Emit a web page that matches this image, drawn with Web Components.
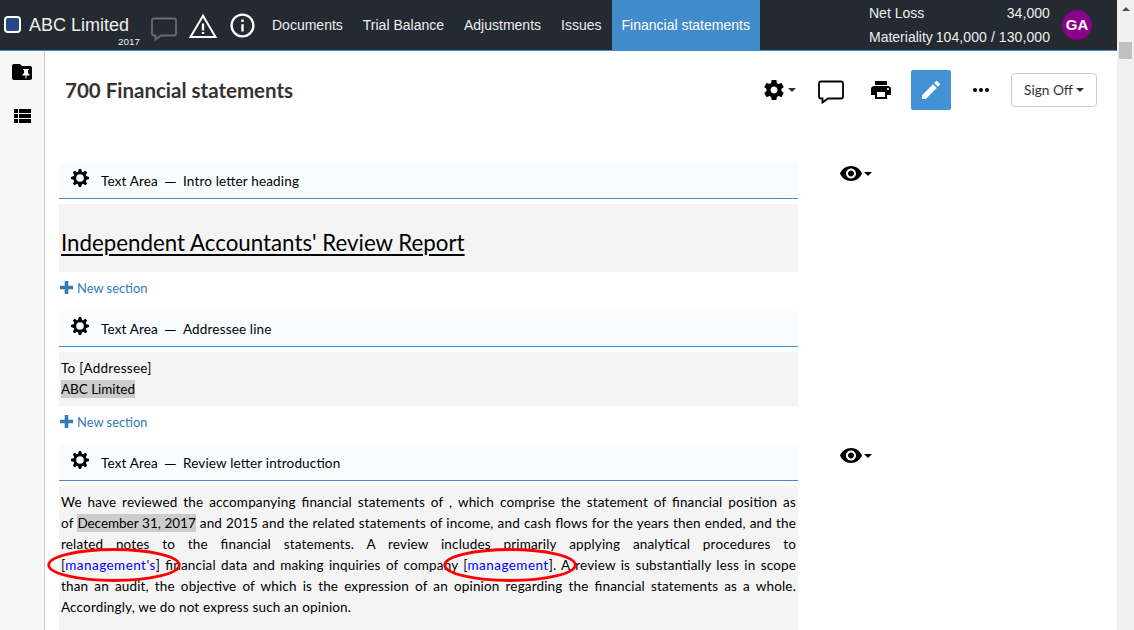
<!DOCTYPE html>
<html lang="en">
<head>
<meta charset="utf-8">
<title>ABC Limited</title>
<style>
html,body{margin:0;height:630px;overflow:hidden;background:#fff;font-family:Lato,"Liberation Sans",sans-serif}
</style>
</head>
<body>
<review-app></review-app>
<script>
const ICONS = {
  chat: ['0 0 26 24', '<path d="M3 1.5H23Q25 1.5 25 3.500V16.500Q25 18.500 23 18.500H10L4.500 22.500V18.500H3Q1 18.500 1 16.500V3.500Q1 1.500 3 1.500Z" fill="none" stroke="currentColor" stroke-width="1.800" stroke-linejoin="miter"/>'],
  warn: ['0 0 30 26', '<path d="M15 2.800L27.500 24H2.500Z" fill="none" stroke="currentColor" stroke-width="2"/><path d="M15 10.500V17.500M15 19V21" stroke="currentColor" stroke-width="2.300"/>'],
  info: ['0 0 24 24', '<path d="M11 7h2v2h-2zm0 4h2v6h-2zm1-9C6.480 2 2 6.480 2 12s4.480 10 10 10 10-4.480 10-10S17.520 2 12 2zm0 18c-4.410 0-8-3.590-8-8s3.590-8 8-8 8 3.590 8 8-3.590 8-8 8z" fill="currentColor"/>'],
  folder: ['0 0 20 16', '<path d="M2 0H8L10 2H18Q20 2 20 4V14Q20 16 18 16H2Q0 16 0 14V2Q0 0 2 0Z" fill="currentColor"/><path d="M11 5h6v1h-1v3l1.500 1.500v1h-3V14.500h-1V11.500h-3v-1L12 9V6h-1z" fill="#fff"/>'],
  list: ['0 0 17 14', '<path d="M0 0h4v4H0zM5 0h12v4H5zM0 5h4v4H0zM5 5h12v4H5zM0 10h4v4H0zM5 10h12v4H5z" fill="currentColor"/>'],
  gear: ['2 2 20 20', '<path fill="currentColor" d="M19.430 12.980c.04-.32.07-.64.07-.98s-.03-.66-.07-.98l2.110-1.650c.19-.15.24-.42.12-.64l-2-3.460c-.12-.22-.39-.3-.61-.22l-2.490 1c-.52-.4-1.080-.73-1.690-.98l-.38-2.650C14.460 2.180 14.250 2 14 2h-4c-.25 0-.46.18-.49.42l-.38 2.650c-.61.25-1.170.59-1.690.98l-2.490-1c-.23-.09-.49 0-.61.22l-2 3.460c-.13.22-.07.49.12.64l2.110 1.650c-.04.32-.07.65-.07.98s.03.66.07.98l-2.110 1.650c-.19.15-.24.42-.12.64l2 3.460c.12.22.39.3.61.22l2.490-1c.52.4 1.080.73 1.690.98l.38 2.650c.03.24.24.42.49.42h4c.25 0 .46-.18.49-.42l.38-2.650c.61-.25 1.170-.59 1.690-.98l2.490 1c.23.09.49 0 .61-.22l2-3.460c.12-.22.07-.49-.12-.64l-2.110-1.650zM12 15.500c-1.930 0-3.500-1.570-3.500-3.500s1.570-3.500 3.500-3.500 3.500 1.570 3.500 3.500-1.570 3.500-3.500 3.500z"/>'],
  cog: ['-9 -9 18 18', '<circle r="5.200" fill="none" stroke="currentColor" stroke-width="2.800"/><g fill="currentColor">' + [0,45,90,135,180,225,270,315].map(a => `<path transform="rotate(${a})" d="M-2 -6L-1.100 -9H1.100L2 -6Z"/>`).join('') + '</g>'],
  print: ['2 3 20 18', '<path fill="currentColor" d="M19 8H5c-1.660 0-3 1.340-3 3v6h4v4h12v-4h4v-6c0-1.660-1.340-3-3-3zm-3 11H8v-5h8v5zm3-7c-.55 0-1-.45-1-1s.45-1 1-1 1 .45 1 1-.45 1-1 1zm-1-9H6v4h12V3z"/>'],
  pencil: ['3 3 18 18', '<path fill="currentColor" d="M3 17.250V21h3.750L17.810 9.940l-3.750-3.750L3 17.250zM20.710 7.040c.39-.39.39-1.020 0-1.410l-2.340-2.340c-.39-.39-1.020-.39-1.410 0l-1.830 1.830 3.750 3.750 1.830-1.830z"/>'],
  dots: ['0 0 16 4', '<g fill="currentColor"><circle cx="2" cy="2" r="2"/><circle cx="8" cy="2" r="2"/><circle cx="14" cy="2" r="2"/></g>'],
  eye: ['1 4.500 22 15', '<path fill="currentColor" d="M12 4.500C7 4.500 2.730 7.610 1 12c1.730 4.390 6 7.500 11 7.500s9.270-3.110 11-7.500c-1.730-4.390-6-7.500-11-7.500zM12 17c-2.760 0-5-2.240-5-5s2.240-5 5-5 5 2.240 5 5-2.240 5-5 5zm0-8c-1.660 0-3 1.340-3 3s1.340 3 3 3 3-1.340 3-3-1.340-3-3-3z"/>'],
  caret: ['0 0 8 4', '<path d="M0 0H8L4 4Z" fill="currentColor"/>'],
  plus: ['0 0 13 13', '<path d="M4.700 0h3.600v4.700H13v3.600H8.300V13H4.700V8.300H0V4.700h4.700z" fill="currentColor"/>']
};
class UiIcon extends HTMLElement {
  connectedCallback() {
    const [box, body] = ICONS[this.getAttribute('name')];
    const w = this.getAttribute('w'), h = this.getAttribute('h');
    this.attachShadow({mode: 'open'}).innerHTML =
      `<style>:host{display:block;flex:none;width:${w}px;height:${h}px}svg{display:block}</style><svg width="${w}" height="${h}" viewBox="${box}">${body}</svg>`;
  }
}
customElements.define('ui-icon', UiIcon);

const define = (name, html) => {
  const t = document.createElement('template');
  t.innerHTML = html;
  customElements.define(name, class extends HTMLElement {
    constructor() { super(); this.attachShadow({mode: 'open'}).append(t.content.cloneNode(true)); }
  });
};

define('top-bar', `<style>
:host{display:flex;height:50px;background:#242a31;border-bottom:1px solid #428bca;color:#eee;font:14px "Liberation Sans",Arial,sans-serif}
.brand{width:140px;padding:0 0 0 4px;box-sizing:border-box;display:grid;grid-template-columns:17px 1fr;column-gap:8px;grid-template-rows:36px 14px}
.logo{width:13px;height:13px;border:2px solid #fff;border-radius:4px;background:#27458c;align-self:end;margin-bottom:3px}
.name{font-size:18px;line-height:20px;align-self:end;margin-bottom:1px;white-space:nowrap}
.year{grid-column:1/3;text-align:right;font-size:9.900px;line-height:12px}
.icons{display:flex;width:122px;padding-left:11px;box-sizing:border-box}
.icons ui-icon:nth-child(1){color:#666b70;margin-top:17px}
.icons ui-icon:nth-child(2){color:#fff;margin:13px 0 0 11px}
.icons ui-icon:nth-child(3){color:#fff;margin:11px 0 0 10px}
nav{display:flex}
nav span{padding:0 10px;line-height:50px;white-space:nowrap}
nav .on{background:#428bca;color:#fff}
.totals{margin-left:auto;width:181px;padding-top:1px;display:grid;grid-template-rows:24px 24px;line-height:24px}
.totals div{display:flex;justify-content:space-between;white-space:nowrap}
.totals span:last-child{letter-spacing:.08px}
.ava{width:30px;height:30px;border-radius:50%;background:#8b008b;color:#fff;font-weight:bold;font-size:15px;line-height:30px;text-align:center;margin:10px 25px 0 12px}
</style>
<div class="brand"><div class="logo"></div><div class="name">ABC Limited</div><div class="year">2017</div></div>
<div class="icons"><ui-icon name="chat" w="26" h="24"></ui-icon><ui-icon name="warn" w="30" h="26"></ui-icon><ui-icon name="info" w="29" h="29"></ui-icon></div>
<nav><span>Documents</span><span>Trial Balance</span><span>Adjustments</span><span>Issues</span><span class="on">Financial statements</span></nav>
<div class="totals"><div><span>Net Loss</span><span>34,000</span></div><div><span>Materiality</span><span>104,000 / 130,000</span></div></div>
<div class="ava">GA</div>`);

define('side-bar', `<style>
:host{display:flex;flex-direction:column;align-items:center;width:44px;background:#f7f7f7;border-right:1px solid #ccc;padding-top:13px;gap:29px;box-sizing:content-box;color:#000}
</style><ui-icon name="folder" w="20" h="16"></ui-icon><ui-icon name="list" w="17" h="14"></ui-icon>`);

define('doc-toolbar', `<style>
:host{display:flex;align-items:center;height:40px;padding:19px 20px 0 20px;color:#000}
h1{font-size:20.500px;line-height:24px;color:#333;margin:0;flex:1;white-space:nowrap}
.edit{width:40px;height:40px;background:#4193d6;color:#fff;display:grid;place-items:center;border-radius:2px;margin:0 22px 0 20px}
.caret{color:#333}
.sign{width:84px;height:32px;border:1px solid #ccc;border-radius:4px;display:flex;align-items:center;justify-content:center;gap:3px;font-size:13.700px;color:#333;margin-left:22px}
.sign span{padding-bottom:1px}
</style>
<h1>700 Financial statements</h1>
<ui-icon name="gear" w="20" h="20"></ui-icon><ui-icon class="caret" name="caret" w="8" h="4" style="margin:0 22px 0 4px"></ui-icon>
<ui-icon name="chat" w="26" h="24" style="margin:3px 27px 0 0"></ui-icon>
<ui-icon name="print" w="20" h="18"></ui-icon>
<div class="edit"><ui-icon name="pencil" w="18" h="18"></ui-icon></div>
<ui-icon name="dots" w="16" h="4"></ui-icon>
<div class="sign"><span>Sign Off</span><ui-icon name="caret" w="8" h="4"></ui-icon></div>`);

define('doc-section', `<style>
:host{display:grid;grid-template-columns:739px 1fr;color:#000;font-size:13.500px;letter-spacing:.16px;font-feature-settings:"liga" 1}
.head{height:35px;background:#f8fcff;border-bottom:1px solid #428bca;display:flex}
.head ui-icon{margin:6px 12px 0 12px}
.label{display:flex;line-height:36px;white-space:pre}
.label i{display:flex;align-items:center;justify-content:center;font-style:normal;width:25px;font-size:16px;letter-spacing:0}
.body{grid-column:1;background:#f4f4f4;margin-top:5px;padding:0 2px}
.eye{display:flex;align-items:center;gap:2px;height:15px;margin:3px 0 0 42px}
.add{grid-column:1;display:flex;align-items:center;height:39px;box-sizing:border-box;padding:0 0 7px 1px;gap:4px;color:#337ab7;font-size:12.900px;letter-spacing:0}
.add ui-icon{margin-bottom:1px}
:host([last]) .add,:host([plain]) .eye{display:none}
</style>
<div class="head"><ui-icon name="cog" w="18" h="18"></ui-icon><span class="label">Text Area<i>—</i><slot name="title"></slot></span></div>
<div class="eye"><ui-icon name="eye" w="22" h="15"></ui-icon><ui-icon name="caret" w="8" h="4"></ui-icon></div>
<div class="body"><slot></slot></div>
<div class="add"><ui-icon name="plus" w="13" h="13"></ui-icon><span>New section</span></div>`);

define('ring-mark', `<style>
:host{position:relative;display:inline}
svg{position:absolute;left:var(--x);top:-9px;overflow:visible;pointer-events:none;z-index:2}
</style><slot></slot><svg width="134" height="34"><ellipse cx="67" cy="17" rx="65.300" ry="15.500" fill="none" stroke="#f00" stroke-width="2.800"/></svg>`);

define('scroll-bar', `<style>
:host{display:flex;flex-direction:column;align-items:center;width:17px;background:#f1f1f1}
.up{border:4px solid transparent;border-top:0;border-bottom:4px solid #505050;margin-top:7px}
.thumb{width:13px;height:17px;background:#c1c1c1;margin-top:31px}
</style><div class="up"></div><div class="thumb"></div>`);

define('review-app', `<style>
:host{display:grid;grid-template-columns:45px 1072px 17px;grid-template-rows:51px 579px;height:630px;overflow:hidden}
top-bar{grid-column:1/3}
scroll-bar{grid-column:3;grid-row:1/3}
main{overflow:hidden}
.doc{padding:53px 0 0 14px}
h2{font-weight:400;font-size:22.300px;letter-spacing:0;line-height:28px;margin:0;padding:25px 0 15px;text-decoration:underline;text-decoration-thickness:2px;text-underline-offset:3px;white-space:nowrap}
p{margin:0;line-height:21px;white-space:nowrap}
.a{padding:6px 0}
.a p:first-child{letter-spacing:.28px}
.b{padding:6px 0 22px}
.b p:not(:last-child){text-align-last:justify}
mark{background:#ccc;color:#000;padding:1px 0;letter-spacing:-.04px}
b{font-weight:400;color:#00f;letter-spacing:.45px}
</style>
<top-bar></top-bar><side-bar></side-bar>
<main><doc-toolbar></doc-toolbar>
<div class="doc">
<doc-section><span slot="title">Intro letter heading</span><h2>Independent Accountants' Review Report</h2></doc-section>
<doc-section plain><span slot="title">Addressee line</span><div class="a"><p>To [Addressee]</p><p><mark>ABC Limited</mark></p></div></doc-section>
<doc-section last><span slot="title">Review letter introduction</span><div class="b">
<p>We have reviewed the accompanying financial statements of , which comprise the statement of financial position as</p>
<p>of <mark>December 31, 2017</mark> and 2015 and the related statements of income, and cash flows for the years then ended, and the</p>
<p>related notes to the financial statements. A review includes primarily applying analytical procedures to</p>
<p><ring-mark style="--x:-14px">[<b>management's</b>]</ring-mark> financial data and making inquiries of company <ring-mark style="--x:-20px">[<b>management</b>]</ring-mark>. A review is substantially less in scope</p>
<p>than an audit, the objective of which is the expression of an opinion regarding the financial statements as a whole.</p>
<p>Accordingly, we do not express such an opinion.</p></div></doc-section>
</div></main>
<scroll-bar></scroll-bar>`);
</script>
</body>
</html>
